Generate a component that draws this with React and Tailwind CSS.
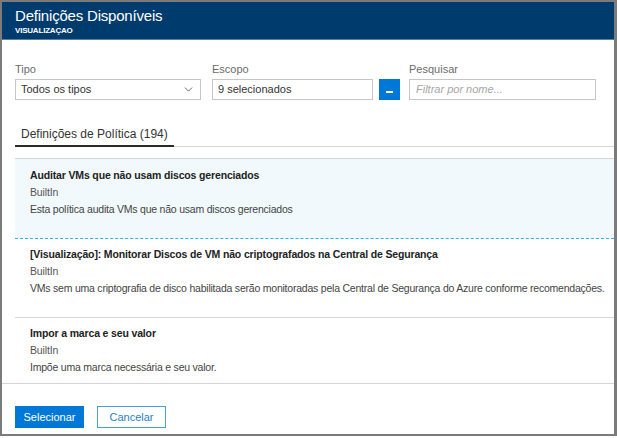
import { ChevronDown } from "lucide-react";

const policies = [
  {
    id: 1,
    name: "Auditar VMs que não usam discos gerenciados",
    type: "BuiltIn",
    description: "Esta política audita VMs que não usam discos gerenciados",
    selected: true,
  },
  {
    id: 2,
    name: "[Visualização]: Monitorar Discos de VM não criptografados na Central de Segurança",
    type: "BuiltIn",
    description:
      "VMs sem uma criptografia de disco habilitada serão monitoradas pela Central de Segurança do Azure conforme recomendações.",
  },
  {
    id: 3,
    name: "Impor a marca e seu valor",
    type: "BuiltIn",
    description: "Impõe uma marca necessária e seu valor.",
  },
];

export default function App() {
  return (
    <div className="h-[438px] w-[617px] bg-white font-['Liberation_Sans',Arial,sans-serif]">
      <div className="flex h-[436px] flex-col border-2 border-r-[3px] border-[#7b7b7b] bg-white">
        {/* Header */}
        <div className="h-[38px] border-b border-[#5a7fa3] bg-[#003b6d] px-[13px] pt-[4px] text-white">
          <h1 className="text-[15px] leading-[19px] tracking-[-0.2px]">Definições Disponíveis</h1>
          <p className="text-[8px] font-bold leading-[12px] tracking-tight">VISUALIZAÇAO</p>
        </div>

        {/* Filters */}
        <div className="flex gap-[11px] px-[13px] pt-[21px] text-[11px]">
          <div className="w-[186px]">
            <label className="block leading-[16px] text-[#6b6b6b]">Tipo</label>
            <div className="mt-[2px] flex h-[21px] items-center justify-between border border-[#c6c6c6] px-[5px] text-[#333]">
              <span>Todos os tipos</span>
              <ChevronDown size={13} strokeWidth={1.5} className="text-[#444]" />
            </div>
          </div>
          <div className="flex items-end gap-[6px]">
            <div className="w-[161px]">
              <label className="block leading-[16px] text-[#6b6b6b]">Escopo</label>
              <div className="mt-[2px] flex h-[21px] items-center border border-[#c6c6c6] px-[5px] text-[#333]">
                9 selecionados
              </div>
            </div>
            <button className="flex h-[21px] w-[21px] items-end justify-center bg-[#0078d7] pb-[7px] text-white">
              <span className="block h-[2px] w-[7px] bg-white" />
            </button>
          </div>
          <div className="-ml-[2px] w-[187px]">
            <label className="block leading-[16px] text-[#6b6b6b]">Pesquisar</label>
            <div className="mt-[2px] flex h-[21px] items-center border border-[#c6c6c6] px-[6px] italic text-[#a6a6a6]">
              Filtrar por nome...
            </div>
          </div>
        </div>

        {/* Tabs */}
        <div className="ml-[13px] mt-[26px] flex border-b border-[#d6d6d6]">
          <div className="-mb-px border-b-2 border-[#2b2b2b] px-[6px] pb-[3px] text-[12px] leading-[16px] text-[#333]">
            Definições de Política (194)
          </div>
        </div>

        {/* List */}
        <div className="ml-[13px] mt-[11px] h-[225px] shrink-0 overflow-hidden border-t border-[#d6d6d6] text-[10.5px] leading-[17px] tracking-[-0.15px]">
          {policies.map((p) => (
            <div
              key={p.id}
              className={
                p.selected
                  ? "whitespace-nowrap border-b border-dashed border-[#29b6e8] bg-[#f2f9fc] px-[15px] pb-[20px] pt-[8px]"
                  : "whitespace-nowrap border-b border-[#d6d6d6] px-[15px] pb-[20px] pt-[7px]"
              }
            >
              <p className="font-bold text-[#222]">{p.name}</p>
              <p className="text-[#555]">{p.type}</p>
              <p className="tracking-[-0.22px] text-[#444]">{p.description}</p>
            </div>
          ))}
        </div>

        {/* Footer */}
        <div className="flex gap-[13px] border-t border-[#d6d6d6] px-[13px] pt-[22px] text-[11px]">
          <button className="h-[22px] w-[69px] bg-[#0078d7] text-white">Selecionar</button>
          <button className="h-[22px] w-[69px] border border-[#4a9ee0] text-[#2a7fc7]">Cancelar</button>
        </div>
      </div>
    </div>
  );
}
